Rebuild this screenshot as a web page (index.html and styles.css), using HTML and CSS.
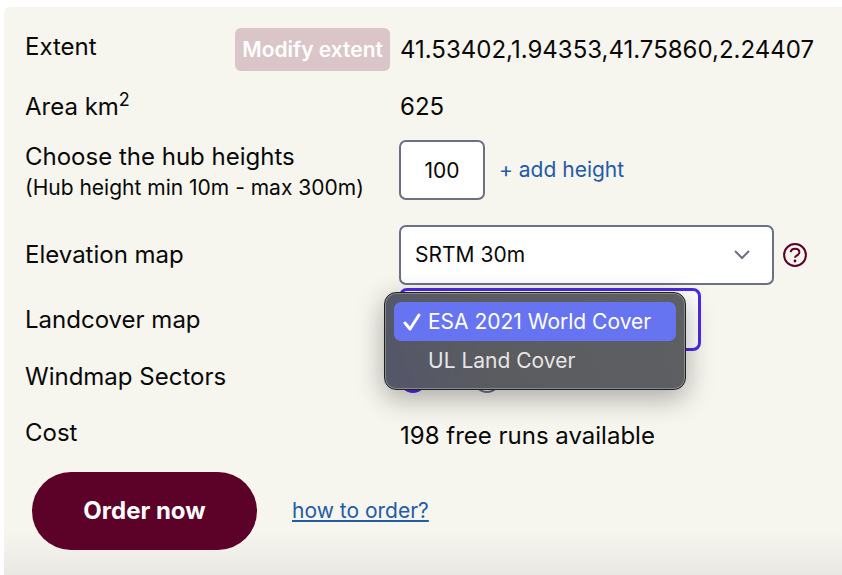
FILE: index.html
```html
<!DOCTYPE html>
<html lang="en">
<head>
<meta charset="utf-8">
<title>Order</title>
<link rel="stylesheet" href="styles.css">
</head>
<body>
<form class="panel">
  <div class="row row-extent">
    <div class="label-group">
      <span class="label raised">Extent</span>
      <button class="modify" type="button" disabled>Modify extent</button>
    </div>
    <span class="value">41.53402,1.94353,41.75860,2.24407</span>
  </div>
  <div class="row row-area">
    <span class="label">Area km<sup>2</sup></span>
    <span class="value">625</span>
  </div>
  <div class="row row-height">
    <label class="label" for="height">Choose the hub heights<small>(Hub height min 10m - max 300m)</small></label>
    <div class="controls">
      <input class="field height" id="height" type="text" value="100">
      <a class="link add" href="#">+ add height</a>
    </div>
  </div>
  <div class="row row-elevation">
    <label class="label" for="elevation">Elevation map</label>
    <div class="controls">
      <div class="select">
        <select class="field" id="elevation"><option>SRTM 30m</option></select>
        <svg class="chevron" viewBox="0 0 18 12" aria-hidden="true"><path d="M2 2l7 7 7-7"/></svg>
      </div>
      <svg class="help" viewBox="0 0 24 24" aria-hidden="true"><circle cx="12" cy="12" r="10.9"/><path d="M7.600 9.200C8 6.800 9.700 5.700 12 5.700c2.500 0 4.400 1.400 4.400 3.500 0 3.300-4.400 2.900-4.400 5.600"/><circle class="dot" cx="12" cy="18" r="1.400"/></svg>
    </div>
  </div>
  <div class="row row-landcover">
    <label class="label" for="landcover">Landcover map</label>
    <div class="dropdown">
      <select class="field focused" id="landcover"><option></option></select>
      <ul class="menu">
        <li class="option selected"><svg viewBox="0 0 18 18" aria-hidden="true"><path d="M2 10l5 6L16 2"/></svg><span>ESA 2021 World Cover</span></li>
        <li class="option"><span>UL Land Cover</span></li>
      </ul>
    </div>
  </div>
  <div class="row row-sectors">
    <span class="label raised">Windmap Sectors</span>
    <div class="radios">
      <input type="radio" name="sectors" aria-label="12" checked>
      <input type="radio" name="sectors" aria-label="36">
    </div>
  </div>
  <div class="row row-cost">
    <span class="label raised">Cost</span>
    <span class="value">198 free runs available</span>
  </div>
  <div class="actions">
    <button class="order" type="button">Order now</button>
    <a class="link" href="#">how to order?</a>
  </div>
</form>
</body>
</html>
```
FILE: styles.css
```css
* { box-sizing: border-box; }
body {
  margin: 0;
  padding: 7px 0 0 4px;
  background: #fff;
  color: #090909;
  font-family: Inter, "Liberation Sans", sans-serif;
  font-size: 24px;
  line-height: 30px;
}
button, input, select { font: inherit; color: inherit; margin: 0; }
.panel {
  min-height: calc(100vh - 7px);
  padding: 21px 16px 24px 21px;
  border-top-left-radius: 6px;
  background: linear-gradient(to top, #e9e8e3, #f6f5ee 44px);
}
.row {
  display: grid;
  grid-template-columns: 365px 1fr;
  column-gap: 9px;
  align-items: center;
}
.row-area { margin-top: 18px; min-height: 36px; }
.row-height { margin-top: 11px; }
.row-elevation { margin-top: 21px; }
.row-landcover { margin-top: 3px; }
.row-sectors { margin-top: 11px; }
.row-cost { margin-top: 20px; }
.raised { padding-bottom: 6px; }
.row-height .label { padding-top: 6px; }
.label small { display: block; font-size: 21px; line-height: 32px; }
.label sup { font-size: 18px; line-height: 0; }
.label-group { display: flex; align-items: center; justify-content: space-between; }
.value { padding-left: 1px; }
.modify {
  height: 43px;
  padding: 0 7px;
  border: 0;
  border-radius: 6px;
  background: #dac5c8;
  color: #fff;
  font-size: 21px;
  font-weight: 600;
  white-space: nowrap;
}
.controls { display: flex; align-items: center; }
.field {
  display: block;
  height: 60px;
  border: 2px solid #6b7086;
  border-radius: 7px;
  background: #fff;
  font-size: 21px;
  appearance: none;
}
.height { width: 86px; padding: 0; text-align: center; }
.link { color: #235ca6; font-size: 21px; }
.add { margin-left: 14px; text-decoration: none; }
.select { position: relative; width: 375px; }
.select .field { width: 100%; padding: 0 48px 0 14px; }
.chevron {
  position: absolute;
  top: 24px;
  right: 23px;
  width: 18px;
  height: 12px;
  fill: none;
  stroke: #6b7086;
  stroke-width: 2;
}
.help {
  width: 24px;
  height: 24px;
  margin-left: 9px;
  fill: none;
  stroke: #5c0229;
  stroke-width: 2;
}
.help .dot { fill: #5c0229; stroke: none; }
.dropdown { position: relative; width: 302px; }
.field.focused {
  width: 100%;
  height: 63px;
  border: 3px solid #4e28e8;
  border-radius: 8px;
  outline: 0;
}
.menu {
  position: absolute;
  z-index: 1;
  top: 4px;
  left: -15px;
  width: 302px;
  margin: 0;
  padding: 9px;
  border: 1px solid #222;
  border-radius: 12px;
  background: linear-gradient(70deg, #53566a, #5b5c60 35%, #5e5f61);
  box-shadow: inset 0 0 0 1px #88898b, 0 8px 28px rgba(0, 0, 0, 0.32);
  color: #e6e6e7;
  font-size: 21px;
  list-style: none;
}
.option {
  display: flex;
  align-items: center;
  height: 39px;
  padding-left: 34px;
  border-radius: 7px;
  white-space: nowrap;
}
.option svg {
  width: 18px;
  height: 18px;
  margin-right: 7px;
  fill: none;
  stroke: #fff;
  stroke-width: 3;
  stroke-linecap: round;
  stroke-linejoin: round;
}
.selected { padding-left: 9px; background: #6774f2; color: #fff; }
.radios { display: flex; gap: 48px; padding-left: 1px; }
.radios input {
  width: 26px;
  height: 26px;
  border: 2px solid #6b7086;
  border-radius: 50%;
  background: #fff;
  appearance: none;
}
.radios input:checked { border: 8px solid #4e28e8; }
.actions { display: flex; align-items: center; gap: 35px; margin: 18px 0 0 7px; }
.order {
  width: 225px;
  height: 78px;
  border: 0;
  border-radius: 39px;
  background: #5c0229;
  color: #fff;
  font-size: 24px;
  font-weight: 700;
}
```
